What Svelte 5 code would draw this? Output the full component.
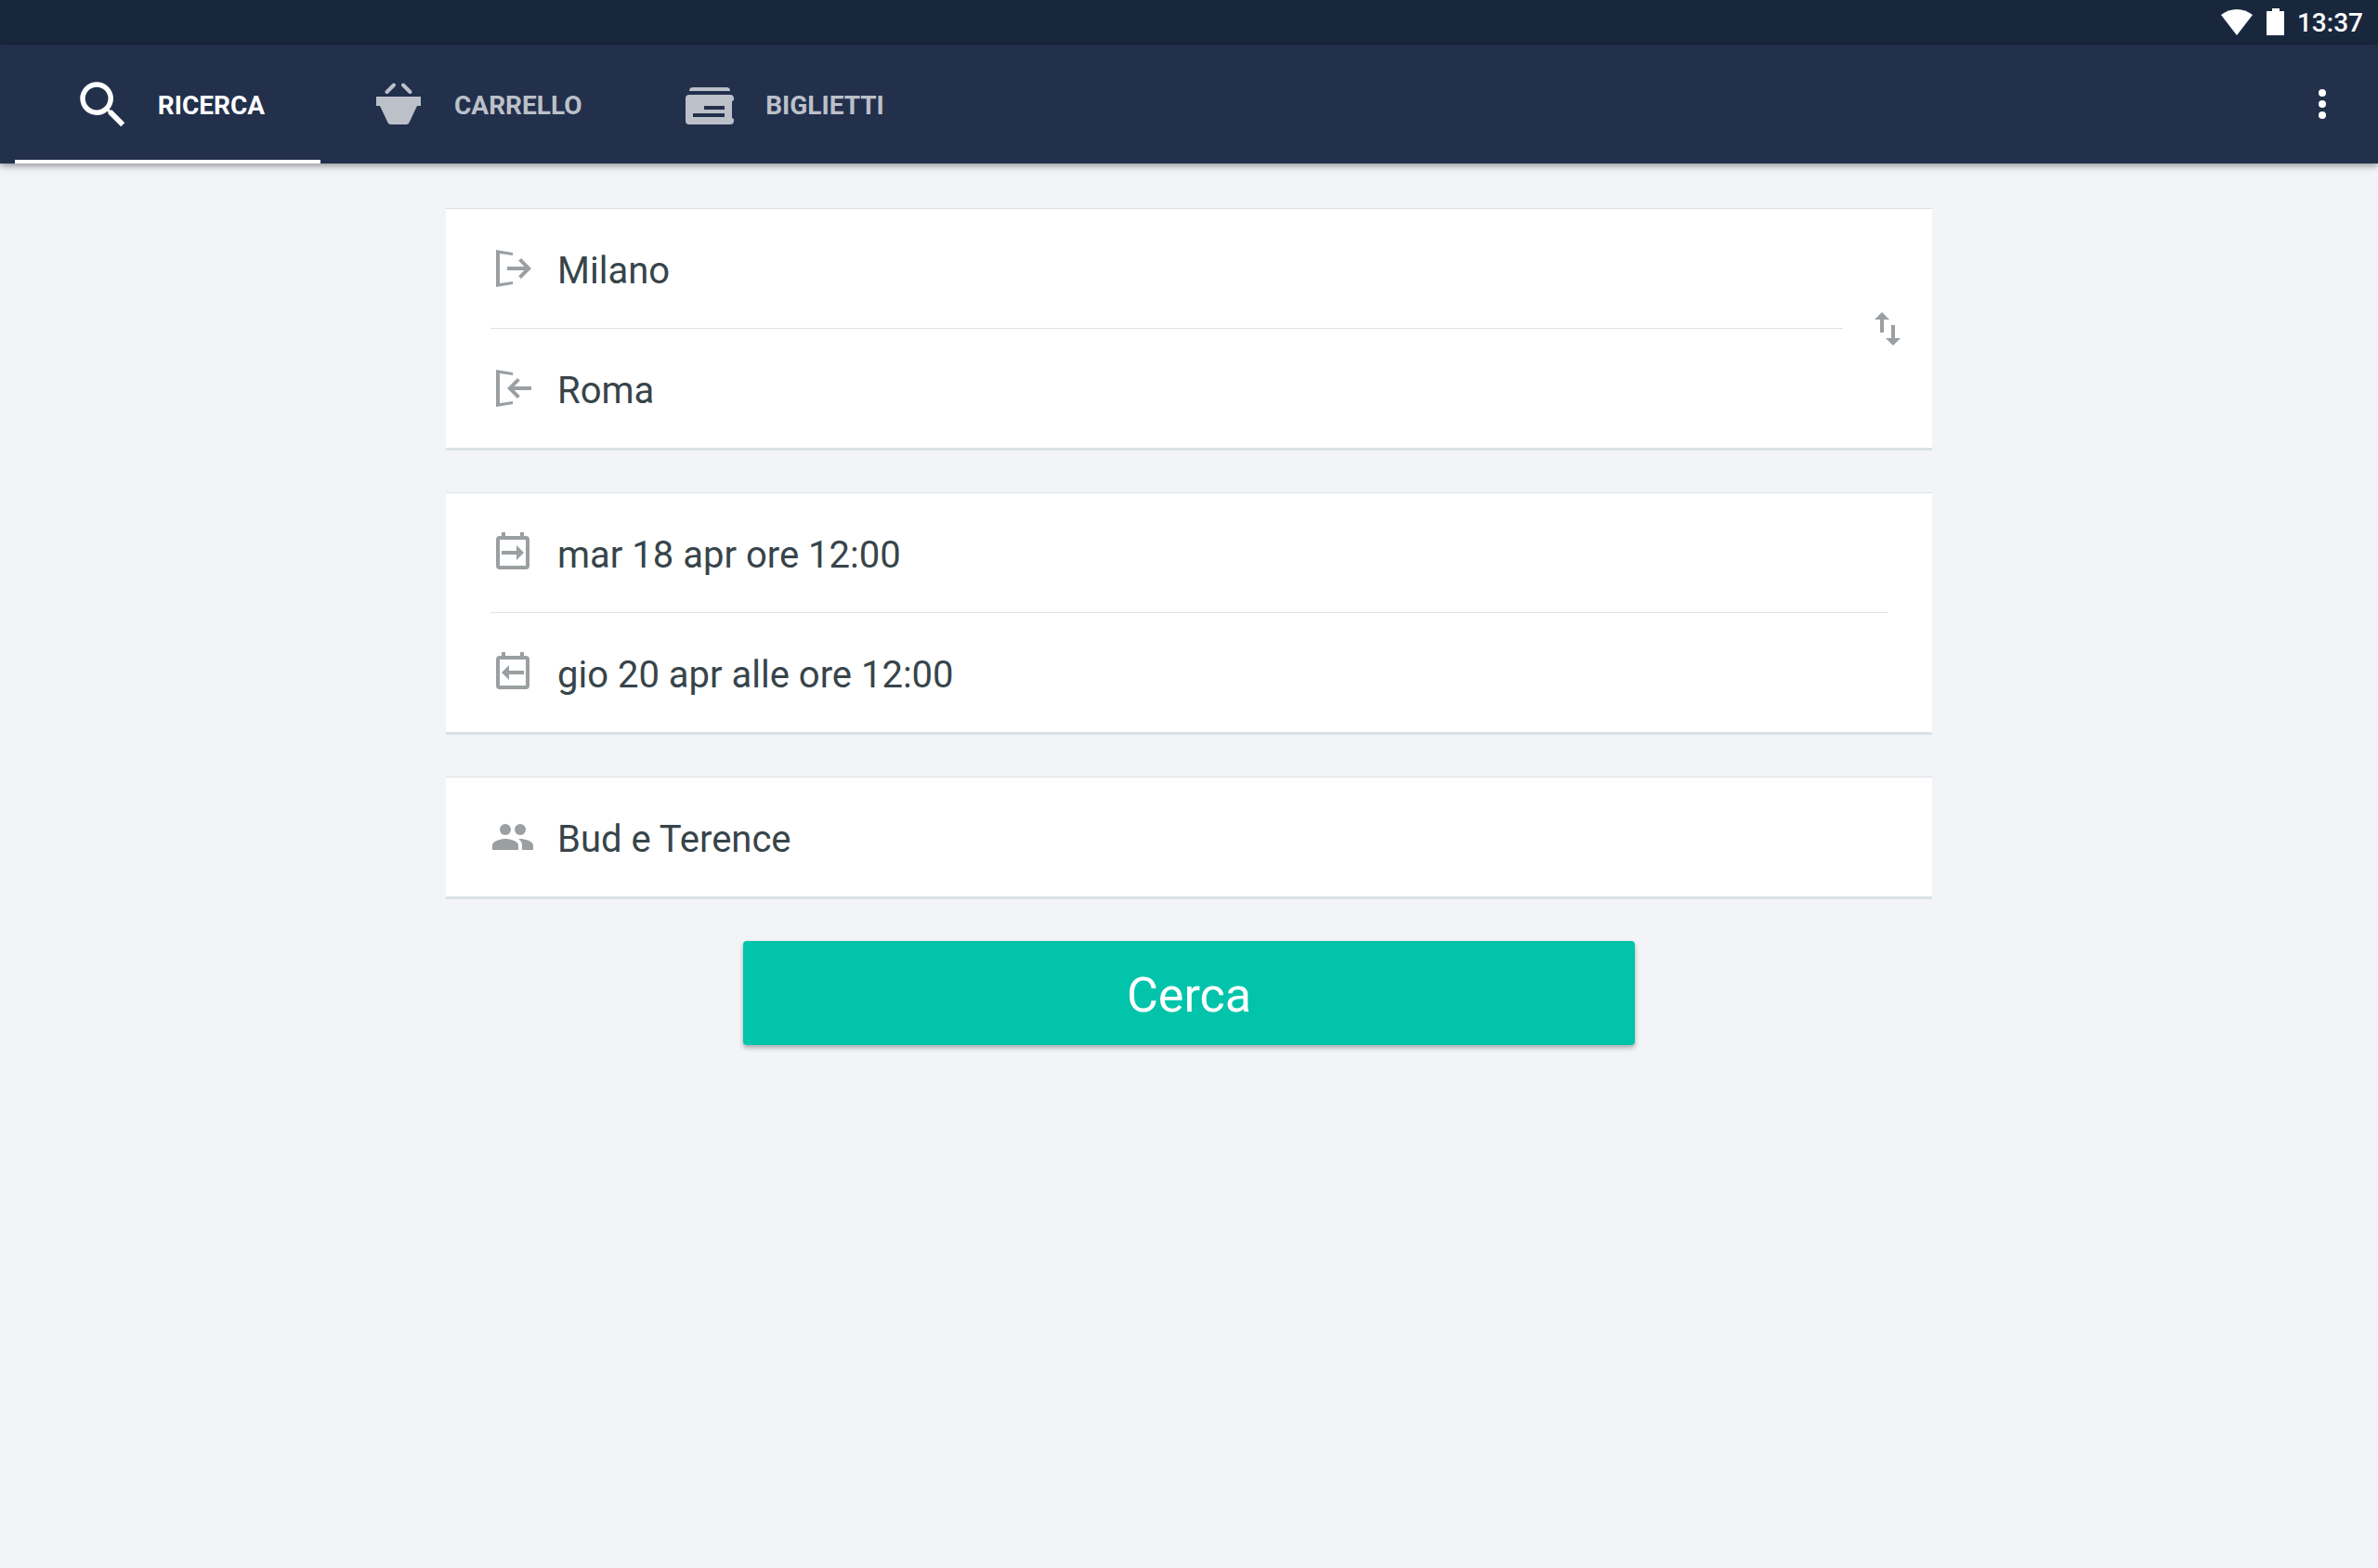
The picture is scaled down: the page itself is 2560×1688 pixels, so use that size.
<!--
	Ticket search screen: status bar, tabbed app bar and the search form
	(stations, dates, passengers). Icons are drawn on a 24-unit grid unless noted.
-->
<script lang="ts">
	type TabId = 'ricerca' | 'carrello' | 'biglietti';

	const tabs: { id: TabId; label: string }[] = [
		{ id: 'ricerca', label: 'RICERCA' },
		{ id: 'carrello', label: 'CARRELLO' },
		{ id: 'biglietti', label: 'BIGLIETTI' }
	];

	let active = $state<TabId>('ricerca');
	let from = $state('Milano');
	let to = $state('Roma');

	const bracket = 'M3 2l9 1.5V5L5 4v16l7-1v1.5L3 22z';
	const calendar =
		'M6 1h2v2h8V1h2v2h1a2 2 0 0 1 2 2v14a2 2 0 0 1-2 2H5a2 2 0 0 1-2-2V5a2 2 0 0 1 2-2h1zM5 5v14h14V5z';

	function swap() {
		[from, to] = [to, from];
	}
</script>

<div class="status">
	<svg class="wifi" viewBox="0 0 34 28" aria-hidden="true">
		<path d="M0 6C10-2 24-2 34 6L17 28z" />
	</svg>
	<svg class="battery" viewBox="0 0 20 30" aria-hidden="true">
		<path d="M6 0h8v3h5v26H0V3h6z" />
	</svg>
	<time>13:37</time>
</div>

<header class="appbar">
	<nav class="tabs" aria-label="Sezioni">
		{#each tabs as tab (tab.id)}
			<button
				class="tab"
				class:active={active === tab.id}
				aria-current={active === tab.id ? 'page' : undefined}
				onclick={() => (active = tab.id)}
			>
				{#if tab.id === 'ricerca'}
					<svg viewBox="0 0 23.3 23.3" aria-hidden="true">
						<path
							d="M15.5 14h-.79l-.28-.27A6.47 6.47 0 0 0 16 9.5 6.5 6.5 0 1 0 9.5 16c1.61 0 3.09-.59 4.23-1.57l.27.28v.79l5 4.99L20.49 19l-4.99-5zm-6 0a4.5 4.5 0 1 1 0-9 4.5 4.5 0 0 1 0 9z"
						/>
					</svg>
				{:else if tab.id === 'carrello'}
					<svg viewBox="0 0 64 64" aria-hidden="true">
						<path d="M8 24h48v10h-4l-8.500 18q-1 2-3 2h-17q-2 0-3-2L12 34H8z" />
						<path class="stroke" d="M19.500 19l7.500-7.500M37 11.500l7.500 7.500" />
					</svg>
				{:else}
					<svg viewBox="0 0 64 64" aria-hidden="true">
						<path d="M10 18q0-4 4-4h36q4 0 4 4z" />
						<path
							fill-rule="evenodd"
							d="M10 22h44q4 0 4 4v2q-2 0-2 2v16q0 2 2 2v2q0 4-4 4H10q-4 0-4-4V26q0-4 4-4zM26 34v4h22v-4zM14 42v4h34v-4z"
						/>
					</svg>
				{/if}
				<span>{tab.label}</span>
			</button>
		{/each}
	</nav>
	<button class="more" aria-label="Altre opzioni">
		<svg viewBox="0 0 24 24" aria-hidden="true">
			<circle cx="12" cy="6" r="2" />
			<circle cx="12" cy="12" r="2" />
			<circle cx="12" cy="18" r="2" />
		</svg>
	</button>
</header>

<main>
	<form onsubmit={(e) => e.preventDefault()}>
		<section class="card stations">
			<div class="rows">
				<label class="row">
					<svg viewBox="0 0 24 24" aria-hidden="true">
						<path d={bracket} />
						<path d="M16.500 6.500L22 12l-5.500 5.500-1.400-1.400L18.200 13H9v-2h9.200l-3.100-3.100z" />
					</svg>
					<input class="value" type="text" aria-label="Partenza" bind:value={from} />
				</label>
				<label class="row">
					<svg viewBox="0 0 24 24" aria-hidden="true">
						<path d={bracket} />
						<path d="M14.500 6.500L9 12l5.500 5.500 1.400-1.400L12.800 13H22v-2h-9.200l3.100-3.100z" />
					</svg>
					<input class="value" type="text" aria-label="Arrivo" bind:value={to} />
				</label>
			</div>
			<button type="button" class="swap" aria-label="Inverti stazioni" onclick={swap}>
				<svg viewBox="0 0 24 24" aria-hidden="true">
					<path d="M16 17v-7h-2v7h-3l4 4 4-4zM9 3L5 7h3v7h2V7h3z" />
				</svg>
			</button>
		</section>

		<section class="card dates">
			<div class="rows">
				<button type="button" class="row">
					<svg viewBox="0 0 24 24" aria-hidden="true">
						<path fill-rule="evenodd" d={calendar} />
						<path d="M6 11h8V8l4 4-4 4v-3H6z" />
					</svg>
					<span class="value">mar 18 apr ore 12:00</span>
				</button>
				<button type="button" class="row">
					<svg viewBox="0 0 24 24" aria-hidden="true">
						<path fill-rule="evenodd" d={calendar} />
						<path d="M18 11h-8V8l-4 4 4 4v-3h8z" />
					</svg>
					<span class="value">gio 20 apr alle ore 12:00</span>
				</button>
			</div>
		</section>

		<section class="card">
			<div class="rows">
				<button type="button" class="row">
					<svg viewBox="0 0 24 24" aria-hidden="true">
						<circle cx="8" cy="8" r="3" />
						<circle cx="16" cy="8" r="3" />
						<path
							d="M8 13c-2.330 0-7 1.170-7 3.500V19h14v-2.500c0-2.330-4.670-3.500-7-3.500zM16 13c-.29 0-.62.02-.97.05 1.160.84 1.970 1.970 1.970 3.450V19h6v-2.500c0-2.330-4.670-3.500-7-3.500z"
						/>
					</svg>
					<span class="value">Bud e Terence</span>
				</button>
			</div>
		</section>

		<button type="submit" class="submit">Cerca</button>
	</form>
</main>

<style>
	:global(body) {
		background: #f2f4f8;
		font-family: Roboto, sans-serif;
	}
	button,
	input {
		margin: 0;
		padding: 0;
		border: 0;
		background: none;
		color: inherit;
		font: inherit;
	}
	button {
		cursor: pointer;
	}
	svg {
		display: block;
		flex: none;
		fill: currentColor;
	}

	.status {
		display: flex;
		align-items: center;
		justify-content: flex-end;
		height: 48px;
		padding-right: 16px;
		background: #19273d;
		color: #fff;
		font-size: 28px;
		font-weight: 500;
		line-height: 48px;
	}
	.status time {
		padding-top: 2px;
	}
	.wifi {
		width: 34px;
		height: 28px;
		margin-right: 15px;
	}
	.battery {
		width: 20px;
		height: 30px;
		margin-right: 13px;
	}

	.appbar {
		position: relative;
		display: flex;
		justify-content: space-between;
		height: 128px;
		padding: 0 36px 0 16px;
		background: #22304c;
		box-shadow: 0 2px 8px rgba(0, 0, 0, 0.45);
	}
	.tabs {
		display: flex;
	}
	.tab {
		display: flex;
		align-items: center;
		justify-content: center;
		gap: 28px;
		box-sizing: border-box;
		min-width: 329px;
		padding: 4px 50px 0 52px;
		border-bottom: 4px solid transparent;
		color: #bcc0c9;
		font-size: 28px;
		font-weight: 700;
	}
	.tab.active {
		border-bottom-color: #fff;
		color: #fff;
	}
	.tab span {
		padding-top: 2px;
	}
	.tab svg {
		width: 64px;
		height: 64px;
	}
	.stroke {
		fill: none;
		stroke: currentColor;
		stroke-width: 4;
		stroke-linecap: round;
	}
	.more {
		color: #fff;
	}
	.more svg {
		width: 48px;
		height: 48px;
	}

	main {
		padding: 48px 32px;
	}
	form {
		display: flex;
		flex-direction: column;
		gap: 45px;
		max-width: 1600px;
		margin: 0 auto;
	}
	.card {
		display: flex;
		border-top: 1px solid #dae2e6;
		border-bottom: 3px solid #dae2e6;
		background: #fff;
		color: #37444a;
	}
	.rows {
		flex: 1;
		padding-left: 48px;
	}
	.dates .rows {
		padding-right: 48px;
	}
	.row {
		display: flex;
		align-items: center;
		gap: 24px;
		box-sizing: content-box;
		width: 100%;
		height: 128px;
		font-size: 40px;
		line-height: 48px;
		text-align: left;
	}
	.row + .row {
		border-top: 1px solid #dae2e6;
	}
	.value {
		flex: 1;
		min-width: 0;
		padding-top: 5px;
		outline: none;
	}
	.row svg,
	.swap svg {
		width: 48px;
		height: 48px;
		color: #9a9fa1;
	}
	.swap {
		display: flex;
		align-items: center;
		justify-content: center;
		width: 96px;
	}

	.submit {
		align-self: center;
		width: 60%;
		height: 112px;
		padding-top: 4px;
		border-radius: 4px;
		background: #02c4aa;
		box-shadow: 0 3px 5px rgba(0, 0, 0, 0.3);
		color: #fff;
		font-size: 52px;
	}
</style>
